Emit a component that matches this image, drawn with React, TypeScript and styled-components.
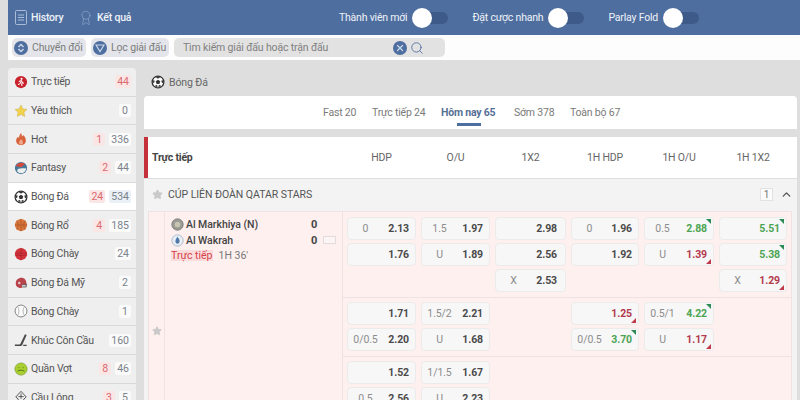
import React from "react";
import styled, { createGlobalStyle } from "styled-components";
import { Search, X, ChevronUp, Star, Award } from "lucide-react";

const Global = createGlobalStyle`
  html, body { margin: 0; padding: 0; width: 800px; height: 400px; overflow: hidden; background: #dedede; }
  body { font-family: Roboto, "Noto Sans", sans-serif; color: #444; }
  * { box-sizing: border-box; }
`;

const Page = styled.div`
  width: 800px;
  height: 400px;
  overflow: hidden;
  padding-left: 8px;
  display: flex;
  flex-direction: column;
`;

const TopBar = styled.header`
  height: 35px;
  flex: none;
  background: #4e6e9f;
  display: flex;
  align-items: center;
  padding: 0 101px 0 7px;
  color: #eef2f8;
  font-size: 10.5px;
  letter-spacing: -0.2px;
`;
const NavLink = styled.div<{ $w: number }>`
  display: flex;
  align-items: center;
  gap: 4px;
  width: ${(p) => p.$w}px;
  font-weight: 500;
`;
const DocIcon = styled.svg`
  width: 12px;
  height: 15px;
  color: #a9bdda;
`;
const MedalIcon = styled(Award)`
  color: #8fa7cc;
  margin-right: -1px;
`;
const ToggleGroup = styled.div`
  margin-left: auto;
  display: flex;
  align-items: center;
  gap: 24px;
`;
const ToggleItem = styled.div`
  display: flex;
  align-items: center;
  gap: 5px;
`;
const Toggle = styled.div`
  width: 36px;
  height: 12px;
  border-radius: 6px;
  background: #3d5a88;
  position: relative;
  &::before {
    content: "";
    position: absolute;
    left: 0;
    top: -4px;
    width: 20px;
    height: 20px;
    border-radius: 50%;
    background: #fff;
  }
`;

const FilterBar = styled.div`
  height: 25px;
  flex: none;
  background: #fdfdfd;
  display: flex;
  align-items: center;
  padding-left: 4px;
  gap: 5px;
  font-size: 10.5px;
  letter-spacing: -0.15px;
  color: #7c7c7c;
`;
const FilterChip = styled.div<{ $w: number }>`
  width: ${(p) => p.$w}px;
  height: 19px;
  border-radius: 5px;
  background: #e3e5ea;
  display: flex;
  align-items: center;
  gap: 4px;
  padding-left: 2px;
`;
const RoundIcon = styled.span`
  width: 14px;
  height: 14px;
  border-radius: 50%;
  background: #4e6e9f;
  color: #c9d6ea;
  display: inline-flex;
  align-items: center;
  justify-content: center;
`;
const GlyphIcon = styled.svg`
  width: 10px;
  height: 10px;
`;
const SearchBox = styled.div`
  width: 271px;
  height: 19px;
  border-radius: 5px;
  background: #e2e2e2;
  display: flex;
  align-items: center;
  padding: 0 21px 0 9px;
  gap: 3px;
  color: #808080;
`;
const SearchText = styled.span`
  flex: 1;
`;
const SearchIcon = styled(Search)`
  color: #4e6e9f;
`;

const Body = styled.div`
  flex: 1;
  min-height: 0;
  display: flex;
  padding-top: 8px;
  gap: 8px;
`;

const Side = styled.nav`
  width: 128px;
  flex: none;
  border-radius: 4px 4px 0 0;
  overflow: hidden;
`;
const SideRow = styled.div<{ $active?: boolean }>`
  height: 28.7px;
  display: flex;
  align-items: center;
  padding: 0 5px 0 6px;
  background: ${(p) => (p.$active ? "#ffffff" : "#efefef")};
  border-bottom: 1px solid #d9d9d9;
  font-size: 10.5px;
  letter-spacing: -0.25px;
  color: #555;
`;
const SideIcon = styled.svg`
  width: 14px;
  height: 14px;
  flex: none;
  margin-right: 3px;
`;
const SideLabel = styled.span`
  flex: 1;
  white-space: nowrap;
`;
const Count = styled.span<{ $live?: boolean; $tint?: boolean }>`
  min-width: 12px;
  padding: 1px 2px;
  margin-left: 4px;
  text-align: center;
  font-size: 10.5px;
  letter-spacing: 0;
  line-height: 11px;
  border-radius: 2px;
  color: ${(p) => (p.$live ? "#d96a70" : "#7b828c")};
  background: ${(p) => (p.$live ? "#fbe6e6" : p.$tint ? "#eaf0f5" : "#fafafa")};
`;

const Main = styled.main`
  width: 653px;
  flex: none;
`;
const Title = styled.div`
  height: 28px;
  display: flex;
  align-items: center;
  gap: 4px;
  padding-left: 7px;
  font-size: 10.5px;
  letter-spacing: -0.1px;
  color: #666;
`;
const TitleIcon = styled.svg`
  width: 14px;
  height: 14px;
`;
const Tabs = styled.div`
  height: 33px;
  background: #fff;
  border-radius: 4px 4px 0 0;
  display: flex;
  padding-left: 179px;
  font-size: 10.5px;
  letter-spacing: -0.2px;
`;
const Tab = styled.div<{ $active?: boolean; $w: number }>`
  width: ${(p) => p.$w}px;
  padding-top: 10px;
  white-space: nowrap;
  position: relative;
  color: ${(p) => (p.$active ? "#567096" : "#7a7a7a")};
  font-weight: ${(p) => (p.$active ? 700 : 400)};
  ${(p) =>
    p.$active &&
    `&::after {
      content: "";
      position: absolute;
      left: 16px;
      top: 27px;
      width: 24px;
      height: 3px;
      background: #4e6e9f;
    }`}
`;

const columns = "69px 69px 71px 68px 70px 68px";

const Header = styled.div`
  margin-top: 8px;
  height: 41px;
  background: #fff;
  border-left: 4px solid #c5313a;
  display: flex;
  align-items: center;
  font-size: 10.5px;
  letter-spacing: -0.2px;
  color: #666;
`;
const HeaderTitle = styled.div`
  width: 199px;
  padding-left: 4px;
  font-weight: 700;
  color: #444;
`;
const ColumnRow = styled.div`
  display: grid;
  grid-template-columns: ${columns};
  column-gap: 5px;
`;
const HeaderCol = styled.div`
  text-align: center;
`;

const League = styled.div`
  height: 32px;
  margin-top: 1px;
  padding: 0 4px 1px 8px;
  background: #f3f3f3;
  display: flex;
  align-items: center;
  font-size: 10.5px;
  letter-spacing: -0.05px;
  color: #555;
`;
const LeagueStar = styled(Star)`
  color: #c9c9c9;
  fill: #c9c9c9;
  margin-right: 5px;
`;
const LeagueName = styled.div`
  flex: 1;
`;
const LeagueCount = styled.span`
  width: 13px;
  height: 13px;
  border: 1px solid #e2e2e2;
  background: #fbfbfb;
  font-size: 10px;
  line-height: 11px;
  text-align: center;
  color: #777;
  margin-right: 7px;
`;
const Chevron = styled(ChevronUp)`
  color: #555;
`;

const Match = styled.div`
  background: #f3f3f3;
  padding: 0 5px 0 4px;
  display: flex;
  height: 190px;
`;
const MatchInner = styled.div`
  flex: 1;
  display: flex;
  background: #fdf0ef;
  border: 1px solid #eee3e2;
  border-bottom: none;
`;
const StarCol = styled.div`
  width: 16px;
  flex: none;
  border-right: 1px solid #eee3e2;
  padding-top: 114px;
  display: flex;
  justify-content: center;
  align-items: flex-start;
`;
const TeamCol = styled.div`
  width: 178px;
  flex: none;
  border-right: 1px solid #eee3e2;
  padding: 4px 6px 0 6px;
  font-size: 10.5px;
`;
const Team = styled.div`
  display: flex;
  align-items: center;
  height: 16px;
  font-weight: 500;
  letter-spacing: -0.05px;
  color: #444;
  gap: 2px;
`;
const TeamName = styled.span`
  flex: 1;
  white-space: nowrap;
`;
const Score = styled.span`
  width: 10px;
  font-weight: 700;
  font-size: 11px;
`;
const TvBox = styled.span`
  width: 13px;
  height: 8px;
  border: 1px solid #e2dcdb;
  background: #fbf6f5;
`;
const TeamGap = styled.span`
  width: 13px;
`;
const Status = styled.div`
  display: flex;
  align-items: center;
  gap: 6px;
  margin-top: 1px;
  font-size: 10.5px;
  color: #777;
`;
const LiveTag = styled.span`
  color: #d5414b;
  background: #fbdcdc;
  line-height: 11px;
`;
const OddsCol = styled.div`
  flex: 1;
`;
const OddsGroup = styled(ColumnRow)<{ $rows: number; $pad: number; $last?: boolean }>`
  grid-template-rows: repeat(${(p) => p.$rows}, 23px);
  row-gap: 3px;
  padding: ${(p) => p.$pad}px 0 5px 4px;
  border-bottom: ${(p) => (p.$last ? "none" : "1px solid #eee3e2")};
`;
const Cell = styled.div<{ $c: number; $r: number }>`
  grid-column: ${(p) => p.$c};
  grid-row: ${(p) => p.$r};
  background: #f8f7f7;
  border: 1px solid #ecebeb;
  border-radius: 4px;
  display: flex;
  align-items: center;
  padding: 0 ${(p) => (p.$c === 3 ? 8 : 6)}px 0 0;
  font-size: 10.5px;
  letter-spacing: -0.1px;
  position: relative;
`;
const Line = styled.span`
  width: 35px;
  text-align: center;
  color: #8c8c8c;
`;
const Price = styled.span<{ $tone?: "up" | "down" }>`
  margin-left: auto;
  font-weight: 700;
  color: ${(p) => (p.$tone === "up" ? "#4ba453" : p.$tone === "down" ? "#b23a4c" : "#4a4a4a")};
`;
const Arrow = styled.span<{ $tone: "up" | "down" }>`
  position: absolute;
  right: 2px;
  width: 0;
  height: 0;
  border-style: solid;
  ${(p) =>
    p.$tone === "up"
      ? "top: 1px; border-width: 0 5px 5px 0; border-color: transparent #2e8b57 transparent transparent;"
      : "bottom: 1px; border-width: 0 0 5px 5px; border-color: transparent transparent #c0394a transparent;"}
`;

type Odd = { c: number; r: number; l?: string; p: string; t?: "up" | "down" };

const g1: Odd[] = [
  { c: 1, r: 1, l: "0", p: "2.13" },
  { c: 1, r: 2, p: "1.76" },
  { c: 2, r: 1, l: "1.5", p: "1.97" },
  { c: 2, r: 2, l: "U", p: "1.89" },
  { c: 3, r: 1, p: "2.98" },
  { c: 3, r: 2, p: "2.56" },
  { c: 3, r: 3, l: "X", p: "2.53" },
  { c: 4, r: 1, l: "0", p: "1.96" },
  { c: 4, r: 2, p: "1.92" },
  { c: 5, r: 1, l: "0.5", p: "2.88", t: "up" },
  { c: 5, r: 2, l: "U", p: "1.39", t: "down" },
  { c: 6, r: 1, p: "5.51", t: "up" },
  { c: 6, r: 2, p: "5.38", t: "up" },
  { c: 6, r: 3, l: "X", p: "1.29", t: "down" },
];
const g2: Odd[] = [
  { c: 1, r: 1, p: "1.71" },
  { c: 1, r: 2, l: "0/0.5", p: "2.20" },
  { c: 2, r: 1, l: "1.5/2", p: "2.21" },
  { c: 2, r: 2, l: "U", p: "1.68" },
  { c: 4, r: 1, p: "1.25", t: "down" },
  { c: 4, r: 2, l: "0/0.5", p: "3.70", t: "up" },
  { c: 5, r: 1, l: "0.5/1", p: "4.22", t: "up" },
  { c: 5, r: 2, l: "U", p: "1.17", t: "down" },
];
const g3: Odd[] = [
  { c: 1, r: 1, p: "1.52" },
  { c: 1, r: 2, l: "0.5", p: "2.56" },
  { c: 2, r: 1, l: "1/1.5", p: "1.67" },
  { c: 2, r: 2, l: "U", p: "2.23" },
];

const Ball = () => (
  <>
    <circle cx="8" cy="8" r="6.7" fill="#fff" stroke="#333" strokeWidth="1.5" />
    <path d="M8 5.3l2.6 1.9-1 3H6.4l-1-3z" fill="#333" />
    <path d="M8 1.5l2.4 1.6L8 4 5.6 3.100zM14 6.500l-.3 3-1.700-1.200.200-2.500zM2 6.500l.3 3 1.700-1.200-.200-2.500zM4.500 13l2.800.8.200-1.600-1.800-1zM11.500 13l-2.800.8-.200-1.600 1.800-1z" fill="#333" />
  </>
);

const icons: Record<string, React.ReactNode> = {
  live: (
    <>
      <circle cx="8" cy="8" r="7" fill="#c8232c" />
      <circle cx="8.600" cy="4.400" r="1.200" fill="#fff" />
      <path d="M5.500 7.500l3-1 1.200 2.400 1.600.6M8 8l-1.500 2.200-2 .6M8.800 9.500l.2 3" stroke="#fff" strokeWidth="1.200" fill="none" />
    </>
  ),
  star: <path d="M8 1.200l2.100 4.400 4.800.6-3.500 3.300.9 4.800L8 12l-4.300 2.300.9-4.800L1.100 6.200l4.800-.6z" fill="#f2d24b" stroke="#c9b257" strokeWidth=".6" />,
  hot: (
    <>
      <path d="M8 1c1 2 1.200 3 .8 4.200C10 4.800 10.400 4 10.600 3.400c2 2 3 4.400 3 6.600 0 3-2.400 5-5.600 5s-5.600-2-5.600-5c0-2.400 1.400-3.600 2.200-5 .4 1 .7 1.600 1.200 2C5.600 5 6.600 2.600 8 1z" fill="#d8623c" />
      <path d="M8 8c1.400 1.400 2.200 2.600 2.200 4 0 1.600-1 2.400-2.200 2.400S5.800 13.600 5.800 12C5.800 10.600 7 9.600 8 8z" fill="#f1a98a" />
    </>
  ),
  fantasy: (
    <>
      <circle cx="8" cy="8" r="7" fill="#47799b" />
      <path d="M2 5.600C4 2 9 .6 12.600 3.200L8.400 7.200z" fill="#d24a3e" />
      <path d="M4.500 9c2.500-1 6-1 9.500-.5-.5 3-3 5.500-6 5.500-2 0-3.500-1-4.500-2.500z" fill="#eee" />
    </>
  ),
  ball: <Ball />,
  basket: (
    <>
      <circle cx="8" cy="8" r="7" fill="#d9743a" />
      <path d="M1 8h14M8 1v14M3 3c2.500 2.500 2.500 7.500 0 10M13 3c-2.500 2.500-2.500 7.500 0 10" stroke="#a8582a" strokeWidth=".8" fill="none" />
    </>
  ),
  red: (
    <>
      <circle cx="8" cy="8" r="7" fill="#d3343c" />
      <path d="M1.500 7h13M1.500 9.500h13M8 1v14" stroke="#a8222a" strokeWidth=".8" />
    </>
  ),
  helmet: (
    <>
      <path d="M2 8.500C2 4.500 5 2 8.500 2c3.500 0 5.500 2.500 5.500 5.500V10H9l.5 3.500c-4 .5-7.500-1-7.500-5z" fill="#b9434a" />
      <path d="M9 10h5.500M9.500 12.500H14v-4" stroke="#555" strokeWidth="1" fill="none" />
      <circle cx="6" cy="8" r="1.400" fill="#e9c9cb" />
    </>
  ),
  baseball: (
    <>
      <circle cx="8" cy="8" r="6.800" fill="#fbfbfb" stroke="#777" strokeWidth="1" />
      <path d="M4 2.600c2.200 3 2.200 7.800 0 10.800M12 2.600c-2.200 3-2.200 7.800 0 10.800" stroke="#999" strokeWidth=".8" fill="none" />
    </>
  ),
  hockey: <path d="M12.500 1.500L7.500 12c-.3.700-.8 1-1.500 1H1v1.800h6.500c.9 0 1.500-.4 1.900-1.200L14.500 2.300zM10.500 13.500h4v1.300h-4z" fill="#4a4a4a" />,
  tennis: (
    <>
      <circle cx="8" cy="8" r="7" fill="#a9cf30" stroke="#6d8a1c" strokeWidth=".6" />
      <path d="M4 10.500c2-1.500 6-1.500 8 0M5.500 6v1M10.500 6v1" stroke="#4a5e10" strokeWidth=".9" fill="none" />
    </>
  ),
  badminton: <path d="M8 1.500L2 8l3 2.500L3 14h3l2-2.500 2 2.500h3l-2-3.500L14 8zM8 4v6M5 7.500l6 0" fill="none" stroke="#555" strokeWidth="1.100" />,
};

type Sport = { icon: string; name: string; live?: string; total?: string; tint?: boolean; active?: boolean };
const sports: Sport[] = [
  { icon: "live", name: "Trực tiếp", live: "44" },
  { icon: "star", name: "Yêu thích", total: "0" },
  { icon: "hot", name: "Hot", live: "1", total: "336" },
  { icon: "fantasy", name: "Fantasy", live: "2", total: "44" },
  { icon: "ball", name: "Bóng Đá", live: "24", total: "534", active: true, tint: true },
  { icon: "basket", name: "Bóng Rổ", live: "4", total: "185" },
  { icon: "red", name: "Bóng Chày", total: "24" },
  { icon: "helmet", name: "Bóng Đá Mỹ", total: "2" },
  { icon: "baseball", name: "Bóng Chày", total: "1" },
  { icon: "hockey", name: "Khúc Côn Cầu", total: "160" },
  { icon: "tennis", name: "Quần Vợt", live: "8", total: "46" },
  { icon: "badminton", name: "Cầu Lông", live: "3", total: "5" },
];

const TeamBadge = styled.svg`
  width: 13px;
  height: 13px;
  flex: none;
`;

const renderOdds = (odds: Odd[]) =>
  odds.map((o) => (
    <Cell key={`${o.c}-${o.r}`} $c={o.c} $r={o.r}>
      {o.l && <Line>{o.l}</Line>}
      <Price $tone={o.t}>{o.p}</Price>
      {o.t && <Arrow $tone={o.t} />}
    </Cell>
  ));

export default function App() {
  return (
    <Page>
      <Global />
      <TopBar>
        <NavLink $w={63}>
          <DocIcon viewBox="0 0 12 15" fill="none" stroke="currentColor" strokeWidth="1">
            <rect x=".5" y=".5" width="11" height="14" rx="1" />
            <path d="M3 5h6M3 7.500h6M3 10h6" />
          </DocIcon>
          History
        </NavLink>
        <NavLink $w={60}>
          <MedalIcon size={16} strokeWidth={1} />
          Kết quả
        </NavLink>
        <ToggleGroup>
          <ToggleItem>
            Thành viên mới
            <Toggle />
          </ToggleItem>
          <ToggleItem>
            Đặt cược nhanh
            <Toggle />
          </ToggleItem>
          <ToggleItem>
            Parlay Fold
            <Toggle />
          </ToggleItem>
        </ToggleGroup>
      </TopBar>
      <FilterBar>
        <FilterChip $w={74}>
          <RoundIcon>
            <GlyphIcon viewBox="0 0 10 10" fill="none" stroke="currentColor" strokeWidth="1.500">
              <path d="M2.500 4L5 1.500 7.500 4M2.500 6L5 8.500 7.500 6" />
            </GlyphIcon>
          </RoundIcon>
          Chuyển đổi
        </FilterChip>
        <FilterChip $w={78}>
          <RoundIcon>
            <GlyphIcon viewBox="0 0 10 10" fill="none" stroke="currentColor" strokeWidth="1.200">
              <path d="M1 2h8L5 8.500z" />
            </GlyphIcon>
          </RoundIcon>
          Lọc giải đấu
        </FilterChip>
        <SearchBox>
          <SearchText>Tìm kiếm giải đấu hoặc trận đấu</SearchText>
          <RoundIcon>
            <X size={10} strokeWidth={3} />
          </RoundIcon>
          <SearchIcon size={14} strokeWidth={1.5} />
        </SearchBox>
      </FilterBar>
      <Body>
        <Side>
          {sports.map((s, i) => (
            <SideRow key={i} $active={s.active}>
              <SideIcon viewBox="0 0 16 16">{icons[s.icon]}</SideIcon>
              <SideLabel>{s.name}</SideLabel>
              {s.live && <Count $live>{s.live}</Count>}
              {s.total && <Count $tint={s.tint}>{s.total}</Count>}
            </SideRow>
          ))}
        </Side>
        <Main>
          <Title>
            <TitleIcon viewBox="0 0 16 16">
              <Ball />
            </TitleIcon>
            Bóng Đá
          </Title>
          <Tabs>
            <Tab $w={49}>Fast 20</Tab>
            <Tab $w={69}>Trực tiếp 24</Tab>
            <Tab $w={73} $active>
              Hôm nay 65
            </Tab>
            <Tab $w={56}>Sớm 378</Tab>
            <Tab $w={60}>Toàn bộ 67</Tab>
          </Tabs>
          <Header>
            <HeaderTitle>Trực tiếp</HeaderTitle>
            <ColumnRow>
              {["HDP", "O/U", "1X2", "1H HDP", "1H O/U", "1H 1X2"].map((h) => (
                <HeaderCol key={h}>{h}</HeaderCol>
              ))}
            </ColumnRow>
          </Header>
          <League>
            <LeagueStar size={11} />
            <LeagueName>CÚP LIÊN ĐOÀN QATAR STARS</LeagueName>
            <LeagueCount>1</LeagueCount>
            <Chevron size={13} strokeWidth={2.5} />
          </League>
          <Match>
            <MatchInner>
              <StarCol>
                <Star size={10} color="#c9c9c9" fill="#c9c9c9" />
              </StarCol>
              <TeamCol>
                <Team>
                  <TeamBadge viewBox="0 0 16 16">
                    <circle cx="8" cy="8" r="7" fill="#9a9a92" stroke="#777" />
                    <circle cx="8" cy="8" r="3.500" fill="#c8c4b4" />
                  </TeamBadge>
                  <TeamName>Al Markhiya (N)</TeamName>
                  <Score>0</Score>
                  <TeamGap />
                </Team>
                <Team>
                  <TeamBadge viewBox="0 0 16 16">
                    <circle cx="8" cy="8" r="7" fill="#e8eef4" stroke="#9fb2c6" />
                    <path d="M8 3.500c1.500 2 2.500 3.500 2.500 5.500S9.500 12 8 12 5.500 11 5.500 9 6.500 5.500 8 3.500z" fill="#4e78a8" />
                  </TeamBadge>
                  <TeamName>Al Wakrah</TeamName>
                  <Score>0</Score>
                  <TvBox />
                </Team>
                <Status>
                  <LiveTag>Trực tiếp</LiveTag>
                  1H 36'
                </Status>
              </TeamCol>
              <OddsCol>
                <OddsGroup $rows={3} $pad={5}>{renderOdds(g1)}</OddsGroup>
                <OddsGroup $rows={2} $pad={4}>{renderOdds(g2)}</OddsGroup>
                <OddsGroup $rows={2} $pad={4} $last>{renderOdds(g3)}</OddsGroup>
              </OddsCol>
            </MatchInner>
          </Match>
        </Main>
      </Body>
    </Page>
  );
}
